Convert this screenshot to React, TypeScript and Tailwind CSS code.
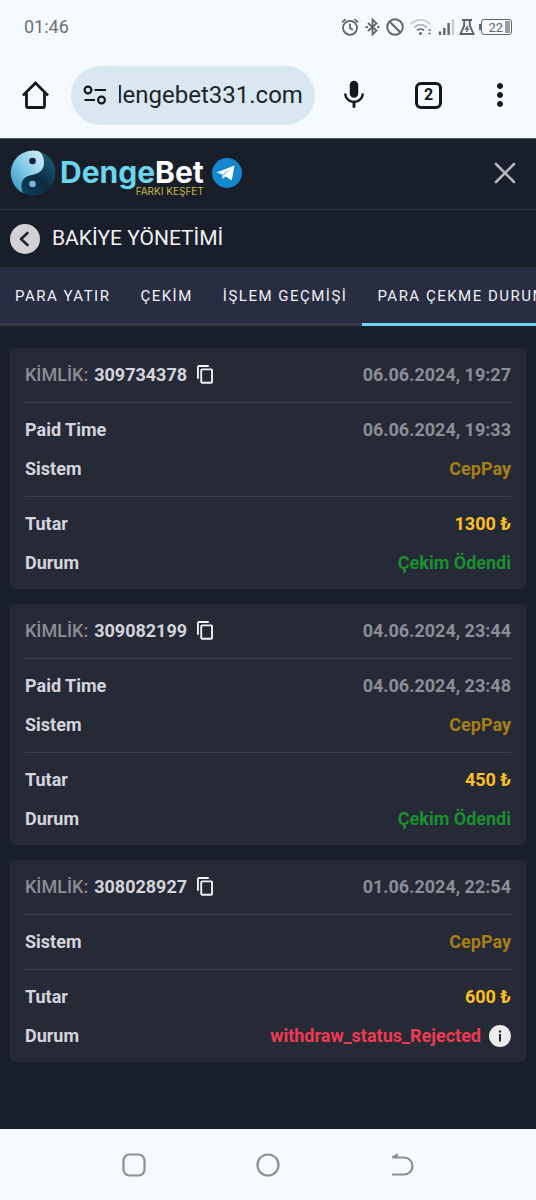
import { useEffect, useRef, useState } from "react";
import { MdMic, MdMoreVert } from "react-icons/md";
import clsx from "clsx";

interface Withdrawal {
  id: string;
  created: string;
  paid?: string;
  system: string;
  amount: number;
  status: string;
  rejected?: boolean;
}

const withdrawals: Withdrawal[] = [
  {
    id: "309734378",
    created: "06.06.2024, 19:27",
    paid: "06.06.2024, 19:33",
    system: "CepPay",
    amount: 1300,
    status: "Çekim Ödendi",
  },
  {
    id: "309082199",
    created: "04.06.2024, 23:44",
    paid: "04.06.2024, 23:48",
    system: "CepPay",
    amount: 450,
    status: "Çekim Ödendi",
  },
  {
    id: "308028927",
    created: "01.06.2024, 22:54",
    system: "CepPay",
    amount: 600,
    status: "withdraw_status_Rejected",
    rejected: true,
  },
];

const tabs = ["PARA YATIR", "ÇEKİM", "İŞLEM GEÇMİŞİ", "PARA ÇEKME DURUMU"];

function StatusIcons() {
  return (
    <div className="flex items-center text-[#5f6569]">
      <svg width="18" height="18" viewBox="0 0 18 18" fill="none" stroke="currentColor" strokeWidth="1.8">
        <circle cx="9" cy="9.8" r="7" />
        <path d="M9 5.8v4.4l3 1.6M1 4.4 4.6 1.2M17 4.4l-3.6-3.2" />
      </svg>
      <svg className="ml-1.5" width="15" height="18" viewBox="0 0 15 18" fill="none" stroke="currentColor" strokeWidth="1.8">
        <path d="m3 5 8.5 7.6-4 3.9v-15l4 3.9L3 13" />
        <path d="M.5 9h2.4M12.1 9h2.4" strokeWidth="2.2" />
      </svg>
      <svg className="ml-1.5" width="18" height="18" viewBox="0 0 18 18" fill="none" stroke="currentColor" strokeWidth="1.9">
        <circle cx="9" cy="9" r="7.8" />
        <path d="m3.5 3.5 11 11" />
      </svg>
      <svg className="ml-1.5" width="22" height="18" viewBox="0 0 22 18" fill="none" stroke="currentColor" strokeWidth="1.8">
        <path d="M.8 6.2C6.5.4 14.5.4 20.2 6.2" opacity=".3" />
        <path d="M4 9.6c4-3.8 9-3.8 13 0" opacity=".45" />
        <path d="M7 12.4c2-1.8 5-1.8 7 0" />
        <circle cx="10.5" cy="15.5" r="1.5" fill="currentColor" stroke="none" />
        <path d="M18.5 12h2.2M18.5 15.5h2.2" strokeWidth="1.4" />
      </svg>
      <svg className="ml-1.5" width="17" height="18" viewBox="0 0 17 18" fill="none" stroke="currentColor" strokeWidth="2.4">
        <path d="M2 17v-3.5M6.3 17v-7M10.6 17V5" />
        <path d="M15 17V1" opacity=".3" />
      </svg>
      <svg className="ml-1" width="16" height="18" viewBox="0 0 16 18" fill="none" stroke="currentColor" strokeWidth="1.9">
        <path d="M3 2h10M5.2 2v5.5L1.5 16h13l-3.7-8.5V2" />
        <path d="M8.8 8 6.6 11h2.8l-2 2.8" strokeWidth="1.3" />
      </svg>
      <div className="ml-1 flex items-center">
        <span className="h-1.5 w-0.5 bg-[#5f6569]" />
        <span className="flex h-4 w-[31px] items-center justify-end gap-0.5 rounded-[3px] border border-[#5f6569] pr-px text-[13px] leading-none">
          22
          <span className="h-3 w-[5px] bg-[#9a9fa3]" />
        </span>
      </div>
    </div>
  );
}

function BrowserBar() {
  const url = useRef<HTMLInputElement>(null);

  // keep the end of the address in view
  useEffect(() => {
    if (url.current) url.current.scrollLeft = url.current.scrollWidth;
  }, []);

  return (
    <div className="flex h-[86px] items-center pr-[18px] pl-[21px] text-[#14181b]">
      <button aria-label="Home" className="shrink-0">
        <svg width="29" height="30" viewBox="0 0 29 30" fill="none" stroke="currentColor" strokeWidth="2.8" strokeLinejoin="round">
          <path d="M5.5 13v13A1.5 1.5 0 0 0 7 27.5h15a1.5 1.5 0 0 0 1.5-1.5V13" />
          <path d="M2 15.5 14.5 3 27 15.5" strokeLinejoin="miter" />
        </svg>
      </button>
      <div className="ml-[21px] flex h-[59px] min-w-0 flex-1 items-center rounded-full bg-[#d8e7f0] px-3">
        <button aria-label="Site settings" className="shrink-0">
          <svg width="24" height="20" viewBox="0 0 24 20" fill="none" stroke="currentColor" strokeWidth="2.2">
            <circle cx="5" cy="5" r="3.4" />
            <path d="M11.5 5H23M1.5 15H12" />
            <circle cx="18.5" cy="15" r="3.4" />
          </svg>
        </button>
        <input
          ref={url}
          aria-label="Address"
          readOnly
          value="dengebet331.com"
          className="ml-3 min-w-0 flex-1 bg-transparent text-2xl text-[#1d2529] outline-none"
        />
      </div>
      <button aria-label="Voice search" className="ml-[22px] shrink-0">
        <MdMic className="size-[34px]" />
      </button>
      <button aria-label="Tabs" className="ml-11 flex size-[27px] shrink-0 items-center justify-center rounded-md border-[3px] border-[#14181b] text-base leading-none font-bold">
        2
      </button>
      <button aria-label="More" className="ml-10 shrink-0">
        <MdMoreVert className="size-9" />
      </button>
    </div>
  );
}

function Logo() {
  return (
    <a href="#" className="flex items-center">
      <svg width="46" height="46" viewBox="0 0 46 46">
        <defs>
          <linearGradient id="light" x1="0" y1="1" x2="1" y2="0">
            <stop offset="0" stopColor="#2f8fbd" />
            <stop offset=".5" stopColor="#84cbe8" />
            <stop offset="1" stopColor="#d9eef6" />
          </linearGradient>
          <linearGradient id="dark" x1="1" y1="0" x2="0" y2="1">
            <stop offset="0" stopColor="#1d6b86" />
            <stop offset=".5" stopColor="#0b2b40" />
            <stop offset="1" stopColor="#0e4a63" />
          </linearGradient>
        </defs>
        <circle cx="23" cy="23" r="22.5" fill="url(#dark)" />
        <path d="M28 1A22.5 22.5 0 0 0 13 43C9 33 13 27 20 25.5 28 24 34 21 34 12.500 34 7 32 3 28 1Z" fill="url(#light)" />
        <circle cx="22.5" cy="11" r="3.3" fill="#0b2536" />
        <circle cx="22.5" cy="34" r="3.3" fill="#79b4dc" />
      </svg>
      <span className="ml-1 flex flex-col items-end pt-2 font-['Inter',sans-serif]">
        <span className="text-3xl leading-7 font-bold text-white">
          <span className="text-[#6bd5ee]">Denge</span>Bet
        </span>
        <span className="text-[10px] leading-[10px] text-[#c9b83c]">FARKI KEŞFET</span>
      </span>
      <svg className="ml-2" width="30" height="30" viewBox="0 0 30 30">
        <circle cx="15" cy="15" r="15" fill="#1487cf" />
        <path d="M4.5 14.5 22.5 7.5 19.7 22.5 13.5 18.2 10.7 21 9.8 16.3Z" fill="#fff" />
        <path d="M9.8 16.3 19 10.5 12.2 17.2 10.7 21Z" fill="#a9cfe8" />
      </svg>
    </a>
  );
}

function Row({ label, children }: { label: React.ReactNode; children: React.ReactNode }) {
  return (
    <div className="flex h-[39px] items-center justify-between">
      <dt className="flex items-center text-[#d4d5dc]">{label}</dt>
      <dd className="flex items-center">{children}</dd>
    </div>
  );
}

function Group({ children }: { children: React.ReactNode }) {
  return (
    <dl className="border-b border-[#3b3e4b] pt-[7px] pb-2 last:border-0 last:pb-[7px]">{children}</dl>
  );
}

function WithdrawalCard({ item }: { item: Withdrawal }) {
  return (
    <article className="rounded-md bg-[#262936] px-[15px] text-lg font-bold">
      <Group>
        <Row
          label={
            <>
              <span className="mr-1.5 font-medium text-[#8b8d97]">KİMLİK:</span>
              {item.id}
              <button aria-label="Kopyala" className="ml-2.5">
                <svg width="16" height="19" viewBox="0 0 17 20" fill="none" stroke="#f1f1f4" strokeWidth="2">
                  <rect x="4.5" y="4.5" width="11.5" height="14.2" rx="1" />
                  <path d="M1 14.5V2.2A1.2 1.2 0 0 1 2.2 1H12.5" />
                </svg>
              </button>
            </>
          }
        >
          <span className="text-[#8b8d97]">{item.created}</span>
        </Row>
      </Group>
      <Group>
        {item.paid && (
          <Row label="Paid Time">
            <span className="text-[#8b8d97]">{item.paid}</span>
          </Row>
        )}
        <Row label="Sistem">
          <span className="text-[#a67f16]">{item.system}</span>
        </Row>
      </Group>
      <Group>
        <Row label="Tutar">
          <span className="text-[#fdc01e]">{item.amount} ₺</span>
        </Row>
        <Row label="Durum">
          <span className={item.rejected ? "text-[#f03a52]" : "text-[#1b8f2d]"}>{item.status}</span>
          {item.rejected && (
            <button aria-label="Bilgi" className="ml-2">
              <svg width="22" height="22" viewBox="0 0 22 22">
                <circle cx="11" cy="11" r="11" fill="#ececec" />
                <path d="M11 9v7.5" stroke="#262936" strokeWidth="2" />
                <circle cx="11" cy="6.5" r="1.2" fill="#262936" />
              </svg>
            </button>
          )}
        </Row>
      </Group>
    </article>
  );
}

export default function App() {
  const [active, setActive] = useState(3);

  return (
    <div className="flex min-h-screen flex-col overflow-x-hidden bg-[#191e2b] font-['Roboto',sans-serif]">
      <div className="bg-[#f5faff]">
        <div className="flex h-[52px] items-center justify-between px-6 pt-0.5">
          <span className="text-lg text-[#6b7175]">01:46</span>
          <StatusIcons />
        </div>
        <BrowserBar />
      </div>

      <header className="flex h-[72px] items-center justify-between border-t border-b border-t-[#4c545f] border-b-[#2c313e] pr-5 pb-0.5 pl-2.5">
        <Logo />
        <button aria-label="Kapat">
          <svg width="22" height="22" viewBox="0 0 22 22" stroke="#b4b6bb" strokeWidth="2.6" strokeLinecap="round">
            <path d="m2 2 18 18M20 2 2 20" />
          </svg>
        </button>
      </header>

      <div className="flex h-[57px] items-center gap-3 pl-2.5">
        <button aria-label="Geri">
          <svg width="30" height="30" viewBox="0 0 30 30" fill="none">
            <circle cx="15" cy="15" r="15" fill="#d2d2d4" />
            <path d="m17.5 9-6.5 6 6.5 6" stroke="#20242f" strokeWidth="2.6" strokeLinecap="round" strokeLinejoin="round" />
          </svg>
        </button>
        <h1 className="text-[21px] text-[#f0f1f4]">BAKİYE YÖNETİMİ</h1>
      </div>

      <nav className="flex h-[59px] overflow-hidden bg-[#282d42]">
        {tabs.map((tab, i) => (
          <button
            key={tab}
            onClick={() => setActive(i)}
            className={clsx(
              "shrink-0 border-b-[3px] px-[15px] pt-0.5 text-[15px] tracking-widest whitespace-nowrap text-[#f0f1f5]",
              i === active ? "border-[#6bd5ee]" : "border-[#363a4c]"
            )}
          >
            {tab}
          </button>
        ))}
      </nav>

      <main className="flex flex-1 flex-col gap-[15px] px-2.5 pt-[22px] pb-4">
        {withdrawals.map((item) => (
          <WithdrawalCard key={item.id} item={item} />
        ))}
      </main>

      <footer className="flex h-[71px] items-center justify-center gap-[110px] bg-[#f5faff] text-[#8a8f92]">
        <button aria-label="Recent apps">
          <svg width="24" height="24" viewBox="0 0 24 24" fill="none" stroke="currentColor" strokeWidth="2.2">
            <rect x="1.5" y="1.5" width="21" height="21" rx="6" />
          </svg>
        </button>
        <button aria-label="Home screen">
          <svg width="24" height="24" viewBox="0 0 24 24" fill="none" stroke="currentColor" strokeWidth="2.2">
            <circle cx="12" cy="12" r="10.5" />
          </svg>
        </button>
        <button aria-label="Back">
          <svg width="24" height="24" viewBox="0 0 24 24" fill="none" stroke="currentColor" strokeWidth="2.2">
            <path d="M8 1.5 2.5 4.500H14a8.5 8.5 0 0 1 0 17H2" />
          </svg>
        </button>
      </footer>
    </div>
  );
}
